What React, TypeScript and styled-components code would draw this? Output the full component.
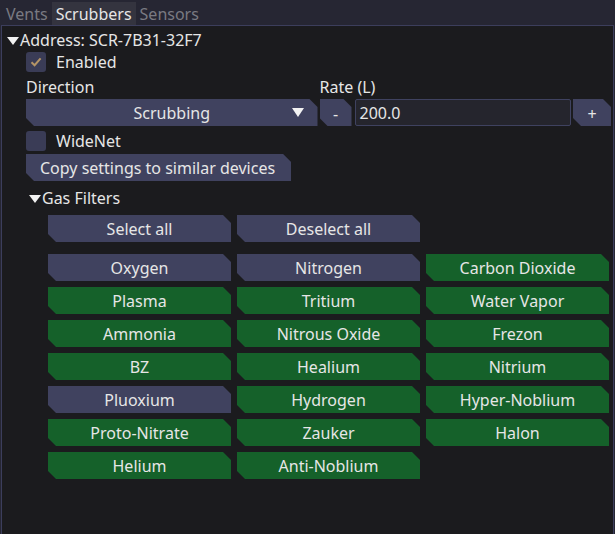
import React, { useState } from 'react';
import styled, { createGlobalStyle, css } from 'styled-components';

const GlobalStyle = createGlobalStyle`
	html, body {
		margin: 0;
		padding: 0;
		background: #1b1b1e;
		overflow: hidden;
	}
	body {
		font-family: 'Noto Sans', 'Open Sans', sans-serif;
		font-size: 16px;
		color: #e6e6e6;
	}
`;

const GASES: { name: string; on: boolean }[] = [
	{ name: 'Oxygen', on: false },
	{ name: 'Nitrogen', on: false },
	{ name: 'Carbon Dioxide', on: true },
	{ name: 'Plasma', on: true },
	{ name: 'Tritium', on: true },
	{ name: 'Water Vapor', on: true },
	{ name: 'Ammonia', on: true },
	{ name: 'Nitrous Oxide', on: true },
	{ name: 'Frezon', on: true },
	{ name: 'BZ', on: true },
	{ name: 'Healium', on: true },
	{ name: 'Nitrium', on: true },
	{ name: 'Pluoxium', on: false },
	{ name: 'Hydrogen', on: true },
	{ name: 'Hyper-Noblium', on: true },
	{ name: 'Proto-Nitrate', on: true },
	{ name: 'Zauker', on: true },
	{ name: 'Halon', on: true },
	{ name: 'Helium', on: true },
	{ name: 'Anti-Noblium', on: true },
];

const TABS = ['Vents', 'Scrubbers', 'Sensors'];

const App = () => {
	const [tab, setTab] = useState('Scrubbers');
	const [gases, setGases] = useState(GASES);

	const toggleGas = (name: string) => {
		setGases((list) => list.map((g) => (g.name === name ? { ...g, on: !g.on } : g)));
	};

	return (
		<>
			<GlobalStyle />
			<Window>
				<TabBar>
					{TABS.map((t) => (
						<Tab key={t} $active={t === tab} onClick={() => setTab(t)}>
							{t}
						</Tab>
					))}
				</TabBar>

				<Panel>
					<TreeHeader>
						<Arrow />
						<span>{`Address: SCR-7B31-32F7`}</span>
					</TreeHeader>

					<Section>
						<CheckRow>
							<CheckBox>
								<svg width="14" height="14" viewBox="0 0 14 14">
									<path d="M2.5 7.2 L5.6 10.2 L11.6 3.4" fill="none" stroke="#b49466" strokeWidth="2" />
								</svg>
							</CheckBox>
							<span>Enabled</span>
						</CheckRow>

						<Columns>
							<Field>
								<Label>Direction</Label>
								<Dropdown>
									<span>Scrubbing</span>
									<DropArrow />
								</Dropdown>
							</Field>
							<Field>
								<Label>Rate (L)</Label>
								<RateRow>
									<StepButton>-</StepButton>
									<Input>200.0</Input>
									<StepButton $wide>+</StepButton>
								</RateRow>
							</Field>
						</Columns>

						<CheckRow $top={5}>
							<CheckBox />
							<span>WideNet</span>
						</CheckRow>

						<CopyButton>Copy settings to similar devices</CopyButton>

						<SubHeader>
							<Arrow />
							<span>Gas Filters</span>
						</SubHeader>

						<GasSection>
							<GasGrid>
								<Button>Select all</Button>
								<Button>Deselect all</Button>
							</GasGrid>
							<GasGrid $top={12}>
								{gases.map((g) => (
									<Button key={g.name} $on={g.on} onClick={() => toggleGas(g.name)}>
										{g.name}
									</Button>
								))}
							</GasGrid>
						</GasSection>
					</Section>
				</Panel>
			</Window>
		</>
	);
};

export default App;

const clipped = css`
	clip-path: polygon(0 0, calc(100% - 8px) 0, 100% 8px, 100% 100%, 8px 100%, 0 calc(100% - 8px));
`;

const Window = styled.div`
	width: 615px;
	height: 534px;
	display: flex;
	flex-direction: column;
	background: #262633;
`;

const TabBar = styled.div`
	height: 25px;
	display: flex;
	align-items: flex-end;
	padding-left: 2px;
	box-sizing: border-box;
`;

const Tab = styled.div<{ $active: boolean }>`
	height: 23px;
	padding: 0 4px;
	line-height: 24px;
	color: ${(p) => (p.$active ? '#e6e6e6' : '#7a7a82')};
	background: ${(p) => (p.$active ? '#34343f' : 'transparent')};
	cursor: pointer;
`;

const Panel = styled.div`
	flex: 1;
	margin: 0 1px;
	border: 1px solid #3c3e5c;
	border-bottom: none;
	background: #1b1b1e;
	padding: 5px 0 0 5px;
	display: flex;
	flex-direction: column;
`;

const TreeHeader = styled.div`
	height: 18px;
	display: flex;
	align-items: center;
	gap: 1px;
`;

const Arrow = styled.span`
	width: 0;
	height: 0;
	border-left: 6px solid transparent;
	border-right: 6px solid transparent;
	border-top: 8px solid #f2f2f2;
	margin-top: 1px;
`;

const Section = styled.div`
	display: flex;
	flex-direction: column;
	padding-left: 19px;
	padding-right: 2px;
`;

const CheckRow = styled.div<{ $top?: number }>`
	height: 20px;
	margin-top: ${(p) => p.$top ?? 3}px;
	display: flex;
	align-items: center;
	gap: 10px;
`;

const CheckBox = styled.div`
	width: 20px;
	height: 20px;
	border-radius: 3px;
	background: #3a3c56;
	display: flex;
	align-items: center;
	justify-content: center;
`;

const Columns = styled.div`
	margin-top: 6px;
	display: grid;
	grid-template-columns: 1fr 1fr;
	gap: 2px;
`;

const Field = styled.div`
	display: flex;
	flex-direction: column;
	gap: 3px;
`;

const Label = styled.div`
	height: 18px;
	line-height: 18px;
`;

const Dropdown = styled.div`
	height: 27px;
	background: #40425f;
	${clipped};
	display: flex;
	align-items: center;
	justify-content: center;
	position: relative;
`;

const DropArrow = styled.span`
	position: absolute;
	right: 14px;
	top: 9px;
	width: 0;
	height: 0;
	border-left: 6px solid transparent;
	border-right: 6px solid transparent;
	border-top: 9px solid #f2f2f2;
`;

const RateRow = styled.div`
	height: 27px;
	display: flex;
	gap: 3px;
`;

const StepButton = styled.div<{ $wide?: boolean }>`
	width: ${(p) => (p.$wide ? 38 : 32)}px;
	margin-left: ${(p) => (p.$wide ? -1 : 0)}px;
	flex-shrink: 0;
	background: #40425f;
	${clipped};
	display: flex;
	align-items: center;
	justify-content: center;
	padding-top: 3px;
	box-sizing: border-box;
`;

const Input = styled.div`
	flex: 1;
	box-sizing: border-box;
	background: #25252d;
	border: 1px solid #3f4260;
	border-radius: 2px;
	padding-left: 4px;
	display: flex;
	align-items: center;
`;

const CopyButton = styled.div`
	align-self: flex-start;
	margin-top: 3px;
	height: 27px;
	padding: 0 16px 0 14px;
	background: #40425f;
	${clipped};
	display: flex;
	align-items: center;
`;

const SubHeader = styled.div`
	margin-top: 8px;
	margin-left: 3px;
	height: 18px;
	display: flex;
	align-items: center;
	gap: 1px;
`;

const GasSection = styled.div`
	margin-top: 8px;
	padding-left: 22px;
	display: flex;
	flex-direction: column;
`;

const GasGrid = styled.div<{ $top?: number }>`
	margin-top: ${(p) => p.$top ?? 0}px;
	width: 561px;
	display: grid;
	grid-template-columns: repeat(3, 1fr);
	gap: 6px;
`;

const Button = styled.div<{ $on?: boolean }>`
	height: 27px;
	background: ${(p) => (p.$on ? '#15612a' : '#40425f')};
	${clipped};
	display: flex;
	align-items: center;
	justify-content: center;
	cursor: pointer;
`;
